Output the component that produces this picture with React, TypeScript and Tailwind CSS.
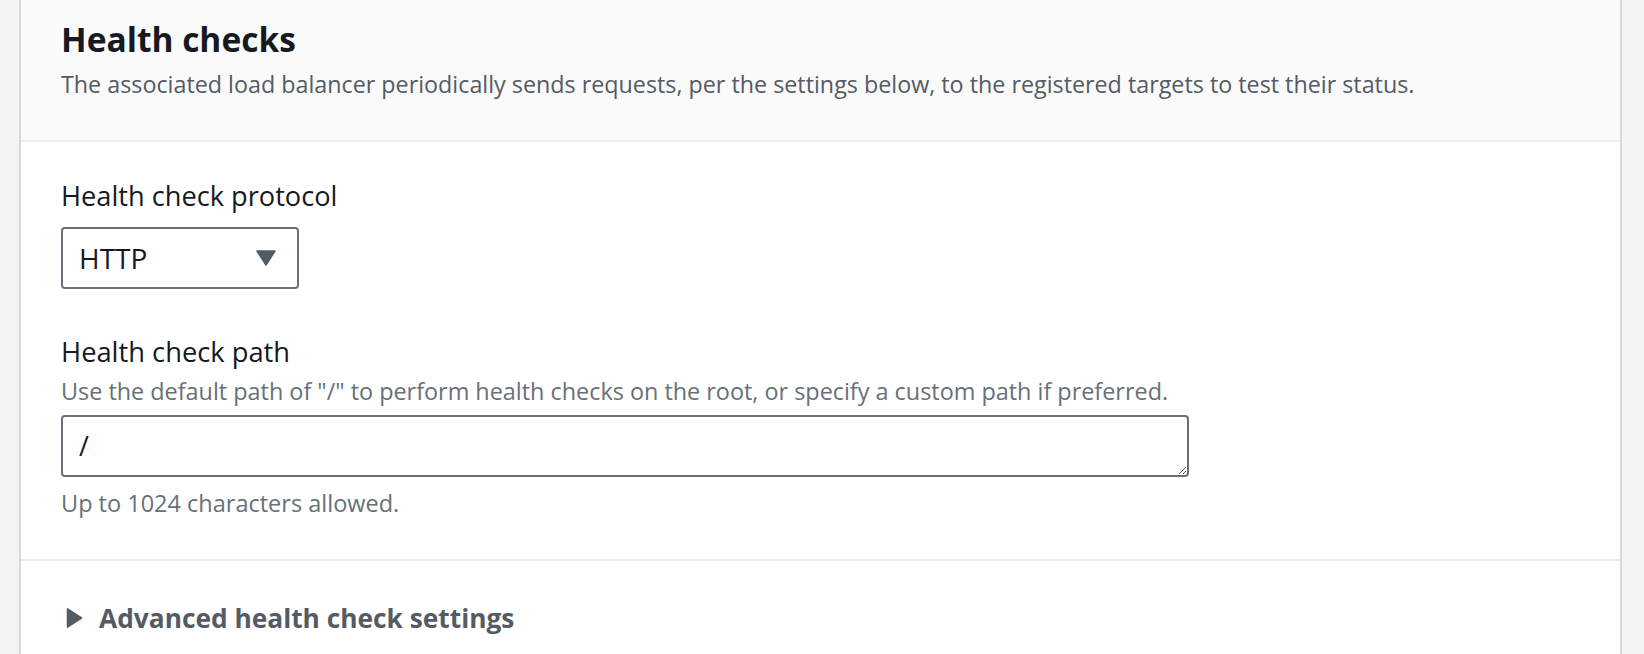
import React from 'react';

function CaretDown() {
  return (
    <svg width="20" height="16" viewBox="0 0 20 16" className="shrink-0">
      <path d="M1 1 H19 L10 15 Z" fill="#545b64" stroke="#545b64" strokeWidth="1.5" strokeLinejoin="round" />
    </svg>
  );
}

function CaretRight() {
  return (
    <svg width="17" height="20" viewBox="0 0 17 20" className="shrink-0">
      <path d="M1.5 1 L15.5 10 L1.5 19 Z" fill="#545b64" stroke="#545b64" strokeWidth="1.5" strokeLinejoin="round" />
    </svg>
  );
}

export default function App() {
  return (
    <div className="min-h-screen bg-[#f2f3f3] pl-[19px] pr-[22px] font-['Open_Sans',sans-serif]">
      <div className="border-x-2 border-[#d5dbdb] bg-white">
        {/* header */}
        <div className="h-[142px] border-b-2 border-[#eaeded] bg-[#fafafa] px-10 pt-[19px]">
          <h2 className="text-[33.5px] leading-[40px] font-bold text-[#16191f]">Health checks</h2>
          <p className="mt-[10px] text-[23.3px] leading-[30px] text-[#545b64]">
            The associated load balancer periodically sends requests, per the settings below, to the registered targets
            to test their status.
          </p>
        </div>

        {/* form */}
        <div className="border-b-2 border-[#eaeded] px-10 pt-[38px] pb-[44px]">
          <label className="block text-[27.2px] leading-[32px] text-[#16191f]">Health check protocol</label>
          <div className="mt-[15px] flex h-[62px] w-[238px] items-center justify-between rounded-[4px] border-2 border-[#687078] pr-[21px] pl-4">
            <span className="text-[28px] text-[#16191f]">HTTP</span>
            <CaretDown />
          </div>

          <label className="mt-[50px] block text-[27.3px] leading-[26px] text-[#16191f]">Health check path</label>
          <p className="mt-[14px] text-[23.4px] leading-[24px] text-[#687078]">
            Use the default path of "/" to perform health checks on the root, or specify a custom path if preferred.
          </p>
          <textarea
            rows={1}
            defaultValue="/"
            className="mt-[12px] block h-[62px] w-[1128px] overflow-hidden rounded-[4px] border-2 border-[#687078] px-4 py-[10px] text-[27px] leading-[38px] text-[#16191f] outline-none"
          />
          <p className="mt-[14px] text-[23.5px] leading-[24px] text-[#687078]">Up to 1024 characters allowed.</p>
        </div>

        {/* advanced */}
        <div className="flex items-center gap-[16px] pt-[41px] pb-[30px] pl-[45px]">
          <CaretRight />
          <span className="text-[26.3px] leading-[32px] font-bold text-[#545b64]">Advanced health check settings</span>
        </div>
      </div>
    </div>
  );
}
